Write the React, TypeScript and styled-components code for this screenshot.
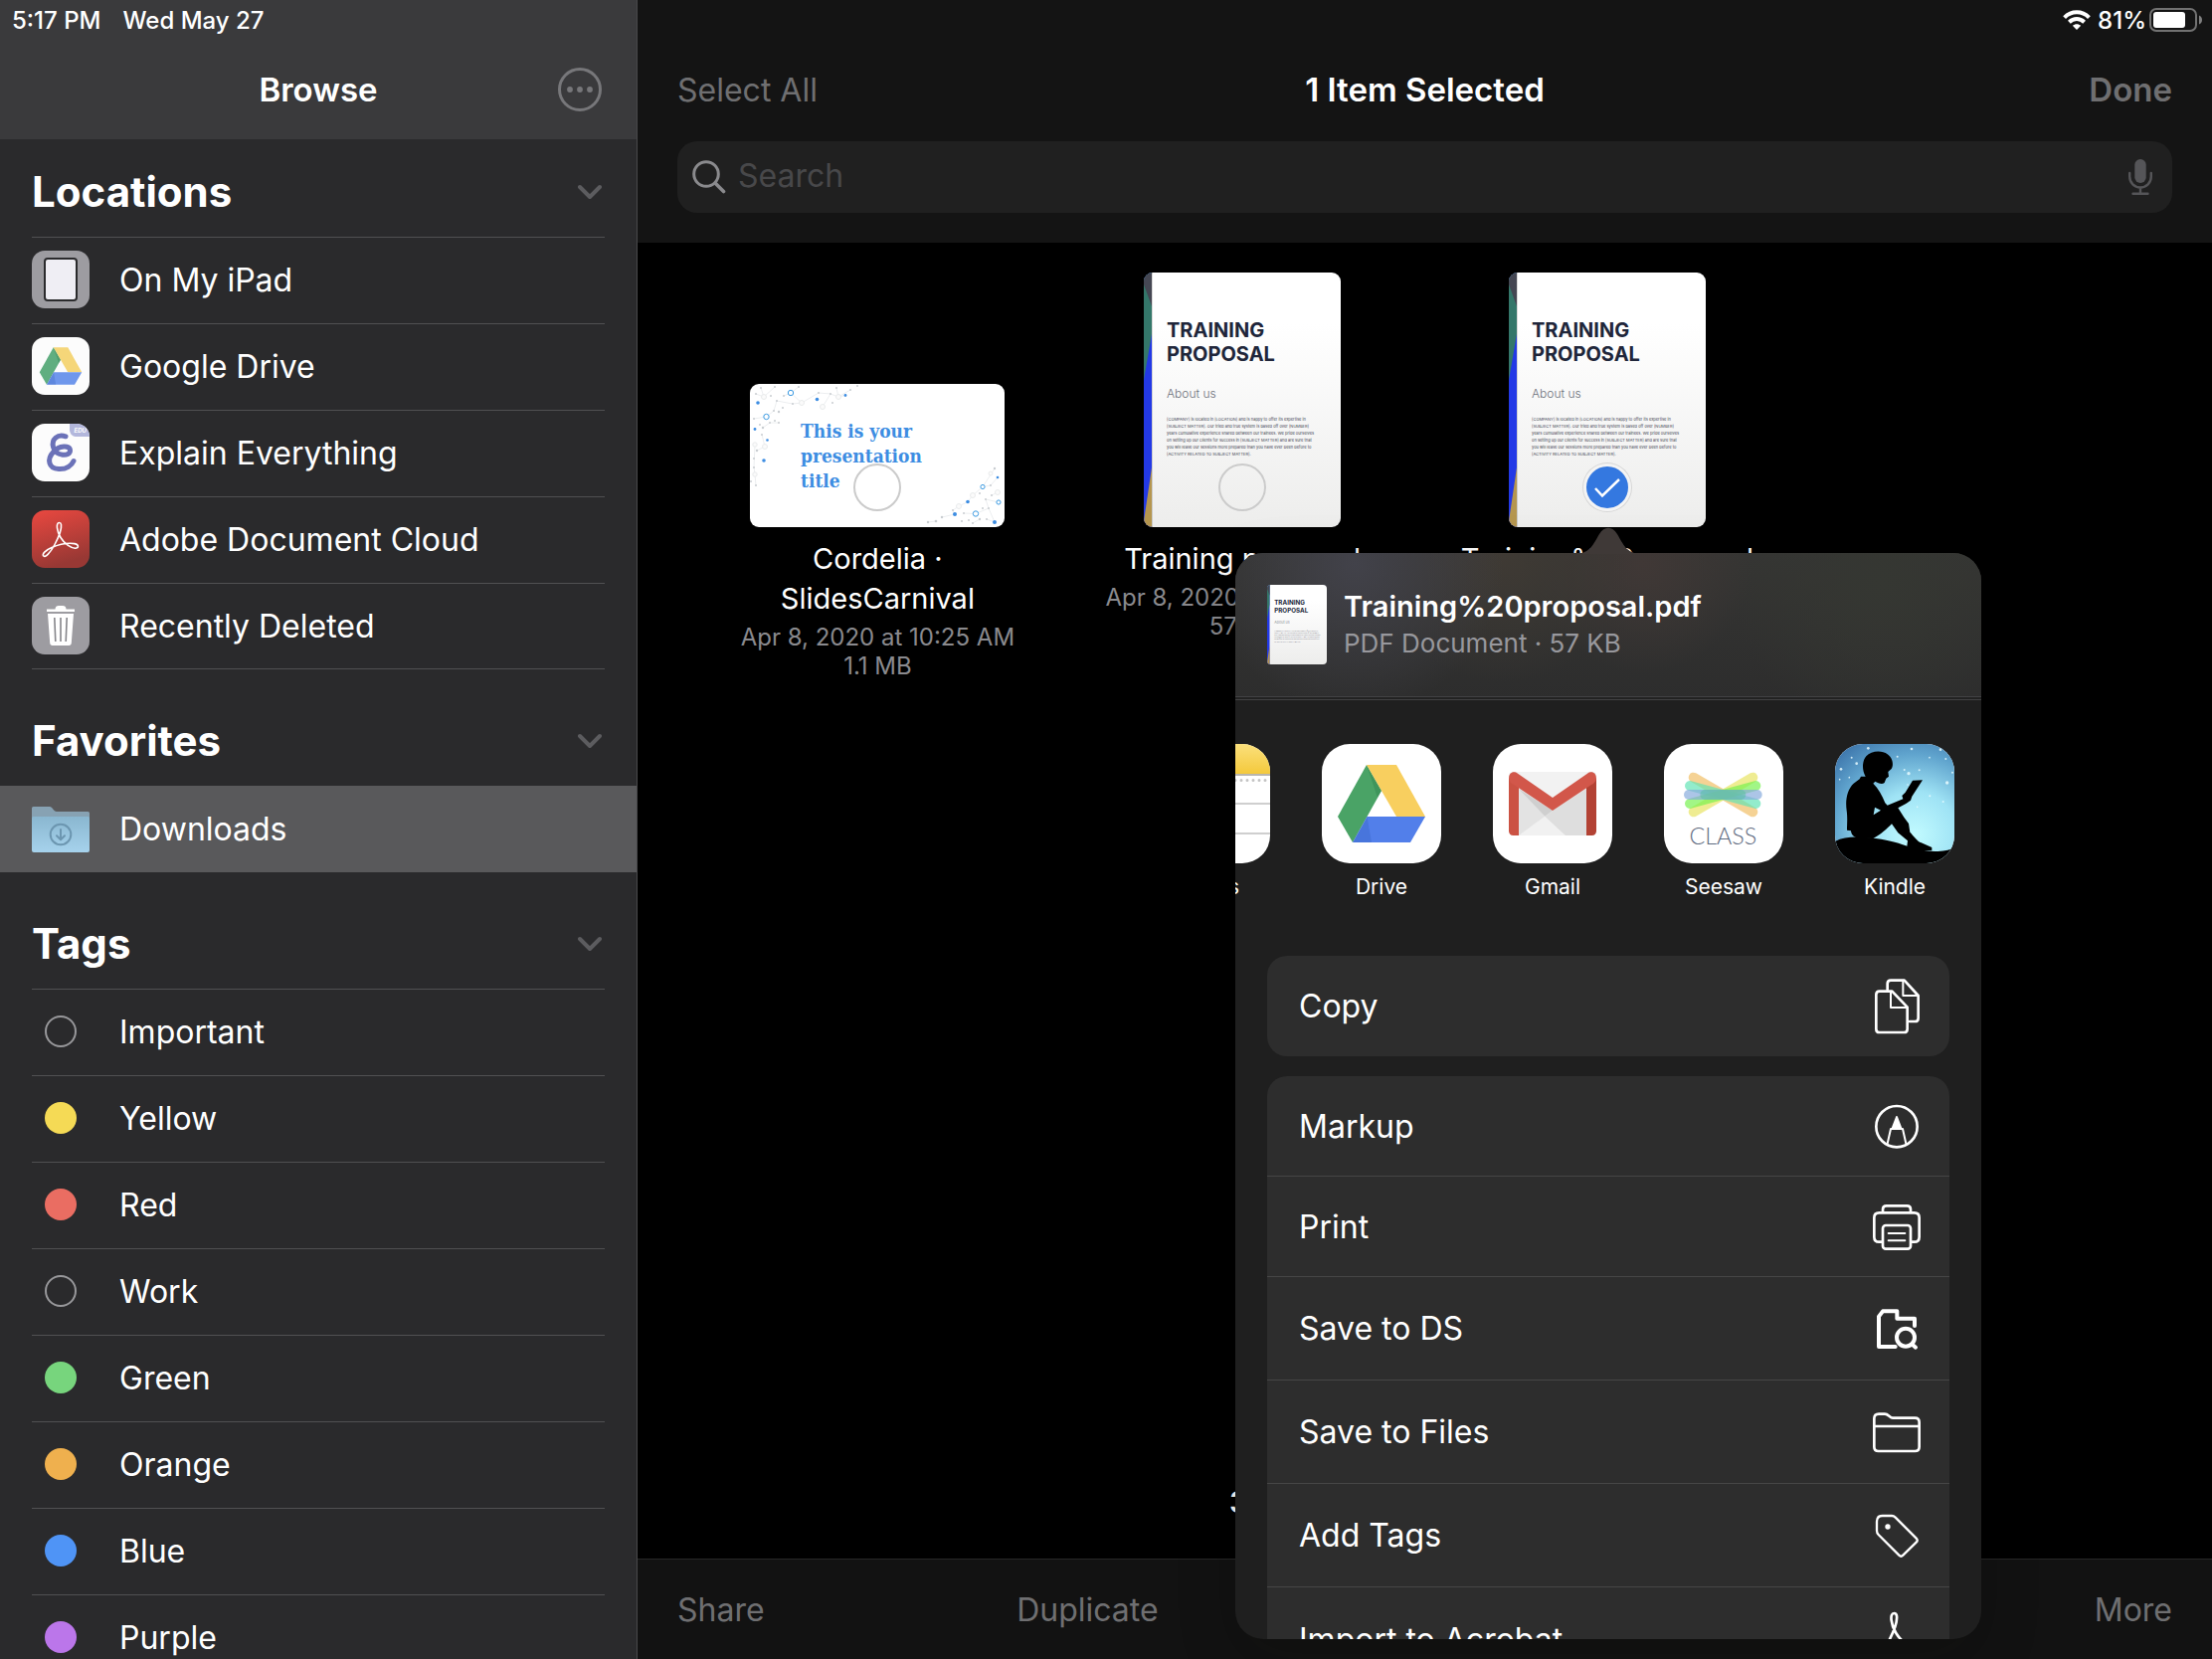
import React from "react";
import styled, { createGlobalStyle, css } from "styled-components";

const GlobalStyle = createGlobalStyle`
  *, *::before, *::after { box-sizing: border-box; }
  body {
    margin: 0;
    background: #000;
    color: #fff;
    font-family: Inter, "Liberation Sans", sans-serif;
    -webkit-font-smoothing: antialiased;
  }
  h1, h2, p, ul { margin: 0; padding: 0; }
  ul { list-style: none; }
  button, input { font: inherit; color: inherit; }
  button { border: 0; background: none; padding: 0; text-align: left; }
  a { color: inherit; text-decoration: none; }
  svg { display: block; flex: none; }
`;

/* ---------- shell ---------- */

const Shell = styled.div`
  position: relative;
  display: grid;
  grid-template-columns: 641px minmax(0, 1fr);
  height: 100vh;
  overflow: hidden;
`;

const Sidebar = styled.aside`
  background: #2a2a2c;
  border-right: 1px solid #48484a;
  overflow: hidden;
`;

const SidebarHeader = styled.header`
  background: #3a3a3c;
`;

const StatusBar = styled.div<{ $end?: boolean }>`
  display: flex;
  align-items: center;
  justify-content: ${(p) => (p.$end ? "flex-end" : "flex-start")};
  gap: ${(p) => (p.$end ? "0" : "22px")};
  height: 40px;
  padding: 0 10px 0 12px;
  font-size: 24px;
  font-weight: 500;
`;

const StatusText = styled.span<{ $level?: boolean }>`
  ${(p) =>
    p.$level &&
    css`
      margin: 0 3px 0 7px;
    `}
`;

const NavRow = styled.div`
  display: grid;
  grid-template-columns: 1fr auto 1fr;
  align-items: center;
  height: 100px;
  padding: 0 40px;
  font-size: 32px;

  > :last-child {
    justify-self: end;
  }
`;

const SidebarNav = styled(NavRow)`
  padding: 0 35px;
`;

const Title = styled.h1`
  font-size: 33px;
  font-weight: 600;
  grid-column: 2;
`;

const BarButton = styled.button<{ $strong?: boolean }>`
  color: #6f6f71;
  ${(p) =>
    p.$strong &&
    css`
      font-size: 33px;
      font-weight: 600;
    `}
`;

/* ---------- sidebar ---------- */

const SectionHead = styled.div<{ $first?: boolean }>`
  display: flex;
  align-items: center;
  justify-content: space-between;
  height: 90px;
  margin-top: ${(p) => (p.$first ? "8px" : "27px")};
  padding: 0 35px 0 32px;
`;

const SectionTitle = styled.h2`
  padding-bottom: 2px;
  font-size: 42px;
  font-weight: 700;
`;

const List = styled.ul<{ $closed?: boolean }>`
  position: relative;
  ${(p) =>
    p.$closed &&
    css`
      &::after {
        content: "";
        position: absolute;
        left: 32px;
        right: 32px;
        bottom: 0;
        height: 1px;
        background: #505052;
      }
    `}
`;

const RowLink = styled.a<{ $active?: boolean }>`
  display: flex;
  align-items: center;
  gap: 30px;
  height: 87px;
  font-size: 32px;
  ${(p) =>
    p.$active
      ? css`
          padding: 0 32px;
          background: #59595b;
        `
      : css`
          margin: 0 32px;
          padding-bottom: 2px;
          border-top: 1px solid #505052;
        `}
`;

const Slot = styled.span`
  display: grid;
  place-items: center;
  width: 58px;
`;

const Dot = styled.span<{ $color?: string }>`
  width: 32px;
  height: 32px;
  border-radius: 50%;
  ${(p) =>
    p.$color
      ? css`
          background: ${p.$color};
        `
      : css`
          border: 2px solid #98989b;
        `}
`;

/* ---------- main column ---------- */

const Main = styled.main`
  display: flex;
  flex-direction: column;
  min-width: 0;
`;

const TopBar = styled.header`
  background: #141414;
  padding-bottom: 30px;
`;

const SearchField = styled.label`
  display: flex;
  align-items: center;
  gap: 12px;
  height: 72px;
  margin: 2px 40px 0;
  padding: 0 20px 0 15px;
  border-radius: 20px;
  background: #202020;
`;

const SearchInput = styled.input`
  flex: 1;
  min-width: 0;
  border: 0;
  padding: 0 0 3px;
  outline: 0;
  background: none;
  font-size: 32px;

  &::placeholder {
    color: #48484a;
    opacity: 1;
  }
`;

const FileGrid = styled.section`
  display: grid;
  grid-template-columns: repeat(4, minmax(0, 1fr));
  padding: 30px 58px 0;
`;

const FileItem = styled.article`
  display: flex;
  flex-direction: column;
  align-items: center;
  text-align: center;
`;

const ThumbArea = styled.div`
  display: flex;
  align-items: flex-end;
  height: 256px;
`;

const Thumb = styled.div`
  position: relative;
  border-radius: 9px;
  overflow: hidden;
`;

const Tick = styled.input`
  position: absolute;
  left: calc(50% - 24px);
  bottom: 16px;
  width: 48px;
  height: 48px;
  margin: 0;
  appearance: none;
  border: 2px solid #cbcbcb;
  border-radius: 50%;

  &:checked {
    border: 3px solid #f4f4f4;
    background: #3478e0;
    box-shadow: 0 0 0 1px #d6d6d6;
  }
`;

const TickMark = styled.svg`
  position: absolute;
  left: calc(50% - 24px);
  bottom: 16px;
  pointer-events: none;
`;

const FileName = styled.p`
  width: 300px;
  margin-top: 12px;
  font-size: 29px;
  line-height: 40px;
`;

const FileMeta = styled.p`
  margin-top: 4px;
  color: #8a8a8e;
  font-size: 24px;
  line-height: 29px;
  white-space: pre-line;
`;

const Summary = styled.p`
  margin: auto 0 37px;
  text-align: center;
  font-size: 30px;
  line-height: 40px;
  font-weight: 600;
`;

const Toolbar = styled.footer`
  display: flex;
  align-items: center;
  justify-content: space-between;
  height: 101px;
  padding: 0 40px;
  border-top: 1px solid #272727;
  background: #121212;
  font-size: 32px;
`;

/* ---------- share popover ---------- */

const Popover = styled.section`
  position: absolute;
  top: 556px;
  right: 232px;
  bottom: 20px;
  width: 750px;
  border-radius: 28px;
  background: #1f1f1f;
  box-shadow: 0 20px 60px rgba(8, 10, 7, 0.2);
`;

const Arrow = styled.svg`
  position: absolute;
  top: -26px;
  left: 343px;
`;

const PopoverBody = styled.div`
  height: 100%;
  border-radius: 28px;
  overflow: hidden;
`;

const ShareHead = styled.header`
  display: flex;
  align-items: center;
  gap: 17px;
  height: 148px;
  padding: 0 32px 4px;
  border-bottom: 1px solid #414143;
  background:
    linear-gradient(#424244, #424244) 0 144px / 100% 1px no-repeat,
    linear-gradient(#222, #222) 0 145px / 100% 3px no-repeat,
    radial-gradient(circle at 120px 10px, #42424a 0, transparent 150px),
    radial-gradient(circle at 270px 0, #3f3a34 0, transparent 130px),
    radial-gradient(circle at 410px 10px, #403836 0, transparent 110px),
    radial-gradient(circle at 650px 30px, #353732 0, transparent 150px),
    linear-gradient(#353533, #2d2d2d);
`;

const MiniThumb = styled.div`
  border-radius: 4px;
  overflow: hidden;
`;

const ShareTitle = styled.h2`
  font-size: 29px;
  line-height: 38px;
  font-weight: 600;
`;

const ShareSub = styled.p`
  color: #98989d;
  font-size: 26px;
  line-height: 36px;
`;

const AppRow = styled.ul`
  display: flex;
  gap: 52px;
  margin-left: -85px;
  padding-top: 44px;
`;

const AppButton = styled.button`
  display: flex;
  flex-direction: column;
  align-items: center;
  gap: 10px;
  width: 120px;
  font-size: 21px;
  line-height: 28px;
`;

const AppIcon = styled.span`
  display: block;
  width: 120px;
  height: 120px;
  border-radius: 28px;
  overflow: hidden;
  background: #fff;
`;

const Actions = styled.div`
  display: flex;
  flex-direction: column;
  gap: 20px;
  padding: 55px 32px 0;
`;

const ActionGroup = styled.div`
  border-radius: 20px;
  overflow: hidden;
  background: #2d2d2d;
`;

const Action = styled.button<{ $tall?: boolean }>`
  display: flex;
  align-items: center;
  justify-content: space-between;
  width: 100%;
  height: ${(p) => (p.$tall ? "104px" : "101px")};
  padding: 0 28px 0 32px;
  font-size: 32px;

  &:not(:last-child) {
    border-bottom: 1px solid #464646;
  }
`;

/* ---------- drawings ---------- */

const Chevron = () => (
  <svg width="24" height="16" viewBox="0 0 24 16" fill="none" stroke="#5c5c5f" strokeWidth="4" strokeLinecap="round" strokeLinejoin="round">
    <path d="M2 3 12 13 22 3" />
  </svg>
);

const MoreIcon = () => (
  <svg width="44" height="44" viewBox="0 0 44 44">
    <circle cx="22" cy="22" r="20.5" fill="none" stroke="#77777a" strokeWidth="3" />
    <circle cx="12" cy="22" r="2.9" fill="#77777a" />
    <circle cx="22" cy="22" r="2.9" fill="#77777a" />
    <circle cx="32" cy="22" r="2.9" fill="#77777a" />
  </svg>
);

const Wifi = () => (
  <svg width="28" height="20" viewBox="0 0 28 20" fill="none" stroke="#fff" strokeWidth="4">
    <path d="M1.6 7.6C8.6 .6 19.4 .6 26.4 7.6" />
    <path d="M6.4 12.2C10.8 8 17.2 8 21.6 12.2" />
    <path d="M14 20 9.8 15.8C12.2 13.6 15.8 13.6 18.2 15.8Z" fill="#fff" stroke="none" />
  </svg>
);

const Battery = () => (
  <svg width="53" height="24" viewBox="0 0 53 24">
    <rect x="1" y="1" width="46" height="22" rx="6" fill="none" stroke="#727272" strokeWidth="2" />
    <rect x="4" y="4" width="32" height="16" rx="3" fill="#fff" />
    <path d="M50 7.5C54 9 54 15 50 16.5Z" fill="#808080" />
  </svg>
);

const SearchIcon = () => (
  <svg width="34" height="34" viewBox="0 0 34 34" fill="none" stroke="#8a8a8d" strokeLinecap="round">
    <circle cx="14" cy="14" r="12.3" strokeWidth="3" />
    <path d="M23.5 23.5 31.5 31.5" strokeWidth="3.6" />
  </svg>
);

const Mic = () => (
  <svg width="24" height="36" viewBox="0 0 24 36" fill="none" stroke="#555558" strokeWidth="2.4" strokeLinecap="round">
    <rect x="6.3" y="0" width="11.4" height="24" rx="5.7" fill="#555558" stroke="none" />
    <path d="M1.2 14V17.5C1.2 24 6 28.5 12 28.5S22.8 24 22.8 17.5V14M12 28.5V34.5M4.5 34.7H19.5" />
  </svg>
);

const IPadIcon = () => (
  <svg width="58" height="58" viewBox="0 0 58 58">
    <rect width="58" height="58" rx="13" fill="#9d9ca1" />
    <rect x="13" y="8" width="32" height="42" rx="3" fill="#efeef4" stroke="#2a2a2c" strokeWidth="2" />
  </svg>
);

const DriveShape = ({ soft }: { soft?: boolean }) => (
  <>
    <path d="M45 21 60 47 31 99 16 73Z" fill={soft ? "#60ae80" : "#4aa366"} />
    <path d="M45 21H75L104 73H75Z" fill={soft ? "#f5d679" : "#f8cf5f"} />
    <path d="M45.5 73H104L89 99H31Z" fill={soft ? "#6f97ec" : "#527fea"} />
    <path d="M45.5 73 31 99 50 99Z" fill="#2b56b5" opacity=".25" />
    <path d="M45 21 60 47 56 54Z" fill="#1d6b3c" opacity=".25" />
  </>
);

const DriveSmall = () => (
  <svg width="58" height="58" viewBox="0 0 120 120">
    <rect width="120" height="120" rx="27" fill="#fcfcfc" />
    <DriveShape soft />
  </svg>
);

const ExplainIcon = () => (
  <svg width="58" height="58" viewBox="0 0 58 58">
    <clipPath id="explain-clip">
      <rect width="58" height="58" rx="13" />
    </clipPath>
    <g clipPath="url(#explain-clip)">
      <rect width="58" height="58" fill="#fcfcfc" />
      <path d="M38 0H58V13H44C40 13 38 9 38 6Z" fill="#b3b7dc" />
      <text x="42.5" y="9.3" fontSize="6" fontWeight="700" fontStyle="italic" fill="#fff">EDU</text>
    </g>
    <path
      d="M34 12.8C26 10 19.5 15.5 21.5 23.5C24 33 38.5 33.5 38.5 27C38.5 21 27 22 22 28C14.5 36 17 45 27 45.5C35 46 40 42 42 37.5"
      fill="none"
      stroke="#6b72b8"
      strokeWidth="5"
      strokeLinecap="round"
    />
  </svg>
);

const AcrobatMark = () => (
  <path
    d="M27.5 12.5C24 12.5 25 21 29 27.5C33 34 39 38 43.5 38.2C47.5 38.3 47.5 34.5 43 33.6C37 32.8 27 34.5 20 37.5C13 40.5 10.5 44 11.5 45.8C13.5 48 18.5 43 23 34.5C27.5 26 30 18 29.5 14.5C29.3 13 28.5 12.5 27.5 12.5Z"
    fill="none"
    stroke="#fff"
  />
);

const AdobeIcon = () => (
  <svg width="58" height="58" viewBox="0 0 58 58">
    <linearGradient id="adobe-red" x1="0" y1="0" x2=".3" y2="1">
      <stop offset="0" stopColor="#ea4840" />
      <stop offset="1" stopColor="#983834" />
    </linearGradient>
    <rect width="58" height="58" rx="13" fill="url(#adobe-red)" />
    <g strokeWidth="1.6">
      <AcrobatMark />
    </g>
  </svg>
);

const TrashIcon = () => (
  <svg width="58" height="58" viewBox="0 0 58 58">
    <rect width="58" height="58" rx="13" fill="#9d9ca1" />
    <path d="M15 15V12.5H23.5C23.5 10 25 9 27 9H31C33 9 34.5 10 34.5 12.5H43V15Z" fill="#fff" />
    <path d="M16 17H42L39.8 46.5C39.7 48 38.8 49 37.3 49H20.7C19.2 49 18.3 48 18.2 46.5Z" fill="#fff" />
    <path d="M22.8 21 23.8 45M29 21V45M35.2 21 34.2 45" stroke="#85858a" strokeWidth="1.6" fill="none" />
  </svg>
);

const FolderIcon = () => (
  <svg width="58" height="46" viewBox="0 0 58 46">
    <linearGradient id="folder-front" x1="0" y1="0" x2="0" y2="1">
      <stop offset="0" stopColor="#8ab7d0" />
      <stop offset="1" stopColor="#a6d2ec" />
    </linearGradient>
    <path d="M0 1.5Q0 0 1.5 0H18C20.5 0 22 5 25 5H56.5Q58 5 58 6.5V20H0Z" fill="#87a2b3" />
    <path d="M0 11.5Q0 10 1.5 10H56.5Q58 10 58 11.5V44Q58 46 56 46H2Q0 46 0 44Z" fill="url(#folder-front)" />
    <g fill="none" stroke="#6c96b0" strokeWidth="2" strokeLinecap="round" strokeLinejoin="round">
      <circle cx="29" cy="28" r="10.3" />
      <path d="M29 23V33M25 29.3 29 33.3 33 29.3" />
    </g>
  </svg>
);

type Spot = [number, number, number];

const blueRings: Spot[] = [[41, 9, 2.7], [16.5, 33, 2.7], [234, 103.5, 2.1], [250, 119, 2.1], [227, 130.5, 2.7]];
const blueDots: Spot[] = [
  [8, 19, 1.8], [67.5, 15.5, 1.8], [96, 11.5, 1.4], [5, 45.5, 1.4], [17.5, 56.5, 1.3], [14, 77, 1.8],
  [249, 94, 1.3], [219, 118.5, 1.8], [206, 131, 2], [246, 139, 2],
];
const grayDots: Spot[] = [
  [6, 10, 1], [11, 4, 1], [25, 3, 1], [21, 12, 1], [34, 12, 1], [49, 3, 1], [69, 9, 1], [81, 10, 1], [87, 4, 1],
  [101, 6, 1], [108, 2, 1], [83, 19, 1], [43, 20, 1], [27, 17, 1], [33, 24, 1], [29, 28, 1.2], [24, 27, 1], [4, 35, 1],
  [10, 41, 1], [13, 44, 1.2], [20, 39, 1], [25, 37, 1], [29, 39, 1], [12, 51, 1], [7, 67, 1.2], [4, 75, 1], [4, 84, 1],
  [1, 98, 1], [6, 102, 1], [246, 85, 1.2], [242, 102, 1], [231, 110, 1], [237, 116, 1], [243, 112, 1], [240, 125, 1],
  [234, 125, 1], [231, 136, 1.2], [238, 136, 1], [224, 140, 1], [215, 130, 1], [204, 127, 1], [193, 134, 1.2],
  [187, 138, 1.3], [179, 139, 1.2], [213, 138, 1], [220, 137, 1],
];
const paleRings: Spot[] = [
  [14, 13, 2.5], [52, 19, 2.5], [73, 23, 2.5], [89, 13, 2.5], [5, 61, 2.2], [15, 63, 2.5], [5, 91, 2.2],
  [242, 90, 2], [210, 123, 2.5], [224, 112, 2.5], [249, 109, 2.5],
];

const SlideThumb = () => (
  <svg width="256" height="144" viewBox="0 0 256 144">
    <rect width="256" height="144" fill="#fff" />
    <path
      d="M6 10 14 13 25 3M11 4 14 13M34 12 41 9 49 3M41 9 52 19 69 9 81 10 89 13 96 11.5M52 19 43 20 27 17M73 23 81 10M87 4 89 13 101 6M4 35 16.5 33 24 27 27 17M13 44 20 39 29 39M12 51 15 63 7 67M5 61 4 84 5 91 6 102M187 138 179 139M193 134 206 131 204 127 210 123 219 118.5 224 112 234 103.5 246 85M215 130 227 130.5 240 125 237 116 250 119M243 112 249 109M231 136 224 140M238 136 246 139 240 125M249 94 242 102 234 103.5"
      fill="none"
      stroke="#eceef0"
    />
    {paleRings.map(([x, y, r]) => <circle key={`p${x}-${y}`} cx={x} cy={y} r={r} fill="#fbfbfb" stroke="#e9ebec" />)}
    {grayDots.map(([x, y, r]) => <circle key={`g${x}-${y}`} cx={x} cy={y} r={r} fill="#c9cdd1" />)}
    {blueDots.map(([x, y, r]) => <circle key={`b${x}-${y}`} cx={x} cy={y} r={r} fill="#3d8de2" />)}
    {blueRings.map(([x, y, r]) => <circle key={`r${x}-${y}`} cx={x} cy={y} r={r} fill="#fff" stroke="#3d9be2" />)}
    <g fontFamily="'DejaVu Serif Condensed', 'DejaVu Serif', serif" fontSize="19" fontWeight="700" fill="#3d8de2">
      <text x="51" y="54">This is your</text>
      <text x="51" y="79">presentation</text>
      <text x="51" y="104">title</text>
    </g>
  </svg>
);

const bodyLines = [
  "[COMPANY] is located in [LOCATION] and is happy to offer its expertise in",
  "[SUBJECT MATTER]. Our tried and true system is based off over [NUMBER]",
  "years cumulative experience shared between our trainees. We pride ourselves",
  "on setting up our clients for success in [SUBJECT MATTER] and are sure that",
  "you will leave our sessions more prepared than you have ever been before to",
  "[ACTIVITY RELATED TO SUBJECT MATTER].",
];

const ProposalPage = ({ id, width, height }: { id: string; width: number; height: number }) => (
  <svg width={width} height={height} viewBox="0 0 198 256" preserveAspectRatio="xMinYMin slice">
    <linearGradient id={id} x1="0" y1="0" x2="0" y2="1">
      <stop offset=".2" stopColor="#fff" />
      <stop offset="1" stopColor="#ededec" />
    </linearGradient>
    <rect width="198" height="256" fill={`url(#${id})`} />
    <rect width="8" height="256" fill="#2339e6" />
    <path d="M0 0H8V62L0 108Z" fill="#34776a" />
    <path d="M0 0H8V34L0 12Z" fill="#454753" />
    <path d="M8 196V256H0V250Z" fill="#b5964f" />
    <path d="M8.5 0V256" stroke="#000" strokeOpacity=".15" />
    <g fill="#20263a" fontSize="20" fontWeight="700">
      <text x="23" y="65">TRAINING</text>
      <text x="23" y="89">PROPOSAL</text>
    </g>
    <text x="23" y="126" fontSize="12" fontWeight="300" fill="#6d717b">About us</text>
    <g fontSize="4" fill="#3c4150">
      {bodyLines.map((line, i) => <text key={line} x="23" y={149 + i * 7}>{line}</text>)}
    </g>
  </svg>
);

const NotesArt = () => (
  <svg width="120" height="120" viewBox="0 0 120 120">
    <linearGradient id="notes-yellow" x1="0" y1="0" x2="0" y2="1">
      <stop offset="0" stopColor="#fbe07c" />
      <stop offset="1" stopColor="#f4c93c" />
    </linearGradient>
    <rect width="120" height="30" fill="url(#notes-yellow)" />
    <path d="M0 31H120" stroke="#b9b6ae" strokeWidth="2" />
    <path d="M1 36.5H120" stroke="#c4c4c4" strokeWidth="3" strokeLinecap="round" strokeDasharray="0 6" />
    <path d="M0 60H120M0 90H120" stroke="#cfcfcf" strokeWidth="2" />
  </svg>
);

const DriveArt = () => (
  <svg width="120" height="120" viewBox="0 0 120 120"><DriveShape /></svg>
);

const GmailArt = () => (
  <svg width="120" height="120" viewBox="63 24 360 360">
    <rect x="111" y="108" width="264" height="192" rx="14" fill="#e9e9e9" />
    <path d="M128 108H358L243 186Z" fill="#f2f2f2" />
    <path d="M141 160 220 242 141 300Z" fill="#e3e3e3" />
    <path d="M141 160 243 225 220 242Z" fill="#cfcfcf" />
    <path d="M141 300 220 242 282 300Z" fill="#f1f1f1" />
    <path d="M220 242 243 225 345 160V300H282Z" fill="#dedede" />
    <path d="M111 126 141 150V300H125Q111 300 111 286Z" fill="#cb5243" />
    <path d="M375 126 345 150V300H361Q375 300 375 286Z" fill="#b34234" />
    <path d="M112 132C108 112 124 102 138 113L243 186 348 113C362 102 378 112 374 132C372 140 366 144 360 147L243 225 126 147C120 144 114 140 112 132Z" fill="#d2574a" />
  </svg>
);

const SeesawArt = () => (
  <svg width="120" height="120" viewBox="576 24 360 360">
    <g fill="none" strokeWidth="30" strokeLinecap="round" strokeOpacity=".68">
      <path d="M665 125 844 229" stroke="#f0bd62" />
      <path d="M665 229 844 125" stroke="#e8e35e" />
      <path d="M654 150 853 204" stroke="#5fe3b4" />
      <path d="M654 204 853 150" stroke="#74f24c" />
      <path d="M651 177H857" stroke="#84a9dc" />
      <path d="M700 177H808" stroke="#55bf9f" strokeOpacity=".5" />
    </g>
    <text x="754" y="326" textAnchor="middle" fontFamily="Lato, sans-serif" fontWeight="300" fontSize="70" fill="#5f6b80">CLASS</text>
  </svg>
);

const kindleStars: Spot[] = [
  [1110, 100, 4], [1157, 83, 4], [1142, 65, 3], [1192, 37, 4], [1323, 39, 4], [1410, 41, 4], [1426, 69, 3], [1377, 65, 2.5],
  [1314, 113, 5], [1301, 102, 3], [1346, 103, 3], [1430, 141, 5], [1418, 198, 3], [1280, 62, 3], [1106, 131, 2.5], [1135, 125, 2.5],
  [1378, 181, 3], [1340, 214, 2.5], [1311, 147, 2.5], [1446, 110, 3],
];

const KindleArt = () => (
  <svg width="120" height="120" viewBox="1092 24 360 360">
    <radialGradient id="kindle-sky" gradientUnits="userSpaceOnUse" cx="1330" cy="300" r="330">
      <stop offset="0" stopColor="#c2fbff" />
      <stop offset=".4" stopColor="#9fe3f5" />
      <stop offset=".75" stopColor="#5fa3cd" />
      <stop offset="1" stopColor="#3f78ad" />
    </radialGradient>
    <rect x="1092" y="24" width="360" height="360" fill="url(#kindle-sky)" />
    {kindleStars.map(([x, y, r]) => <circle key={`${x}`} cx={x} cy={y} r={r} fill="#e9fbff" opacity=".85" />)}
    <path d="M1092 318C1125 300 1170 304 1215 309C1260 315 1290 325 1312 333C1345 344 1375 349 1402 348C1425 347 1442 343 1452 337V384H1092Z" />
    <path
      fillRule="evenodd"
      d="M1184 122C1172 102 1174 74 1186 61C1200 44 1234 42 1250 55C1265 65 1270 86 1262 99L1252 108 1254 122 1246 128 1241 141C1233 147 1222 142 1213 137L1207 143C1222 158 1234 178 1243 202L1250 209 1297 190 1294 180 1304 170 1326 134 1356 133 1324 182 1320 194 1306 204 1282 217 1300 245 1314 264 1318 290C1328 300 1340 318 1352 322L1384 336 1384 346H1330L1309 333 1311 316 1282 292 1263 265C1248 280 1232 296 1207 309L1160 308C1146 304 1140 294 1140 286L1128 284C1128 262 1130 248 1127 225C1122 190 1130 160 1148 143L1166 130 1170 122ZM1212 215 1230 224 1208 238Z"
    />
  </svg>
);

/* Action glyphs share one 50×56 frame, most drawn at three units per pixel. */
const Glyph = styled.svg.attrs({ width: 50, height: 56 })`
  fill: none;
  stroke: #fff;
  stroke-linejoin: round;
  stroke-linecap: round;
`;

const CopyGlyph = () => (
  <Glyph viewBox="36 41 150 168">
    <g strokeWidth="8">
      <path d="M83 74V56Q83 46 93 46H134L176 92V160Q176 170 166 170H150" />
      <path d="M59 79H97L143 127V193Q143 203 133 203H59Q49 203 49 193V89Q49 79 59 79Z" />
    </g>
    <path d="M130 48V92H174M93 81V128H141" strokeWidth="6" />
  </Glyph>
);

const MarkupGlyph = () => (
  <Glyph viewBox="36 403 150 168">
    <circle cx="111" cy="489" r="62" strokeWidth="8" />
    <path d="M83 540 93 496H129L139 540" strokeWidth="6" />
    <path d="M111 460 98 494H124Z" fill="#fff" strokeWidth="6" />
  </Glyph>
);

const PrintGlyph = () => (
  <Glyph viewBox="36 705 150 168">
    <g strokeWidth="8">
      <path d="M69 746V738Q69 727 80 727H142Q153 727 153 738V746" />
      <path d="M66 836H58Q43 836 43 821V763Q43 748 58 748H164Q179 748 179 763V821Q179 836 164 836H156" />
      <rect x="69" y="786" width="84" height="71" rx="9" />
    </g>
    <path d="M86 810H136M86 832H136" strokeWidth="6" />
  </Glyph>
);

const FolderSearchGlyph = () => (
  <Glyph viewBox="36 1013 150 168">
    <g strokeWidth="12">
      <path d="M107 1151H57V1060L69 1044H112V1066H165V1088" />
      <circle cx="138" cy="1123" r="27" />
      <path d="M158 1144 168 1153" />
    </g>
  </Glyph>
);

const FilesGlyph = () => (
  <Glyph viewBox="36 1325 150 168">
    <path
      d="M43 1368Q43 1354 57 1354H75C86 1354 90 1366 99 1366H166Q179 1366 179 1379V1453Q179 1466 166 1466H56Q43 1466 43 1453ZM43 1391H179"
      strokeWidth="8"
    />
  </Glyph>
);

const TagGlyph = () => (
  <Glyph viewBox="36 0 150 168">
    <path d="M68 24H96Q102 24 107 29L170 92Q176 98 170 104L130 143Q124 149 118 143L56 81Q51 76 51 69V41Q51 24 68 24Z" strokeWidth="7" />
    <circle cx="84" cy="57" r="8" fill="#fff" stroke="none" />
  </Glyph>
);

const AcrobatGlyph = () => (
  <Glyph viewBox="11 11 37 42">
    <g strokeWidth="2">
      <AcrobatMark />
    </g>
  </Glyph>
);

/* ---------- data ---------- */

const locations = [
  { label: "On My iPad", icon: <IPadIcon /> },
  { label: "Google Drive", icon: <DriveSmall /> },
  { label: "Explain Everything", icon: <ExplainIcon /> },
  { label: "Adobe Document Cloud", icon: <AdobeIcon /> },
  { label: "Recently Deleted", icon: <TrashIcon /> },
];

const tags: { label: string; color?: string }[] = [
  { label: "Important" },
  { label: "Yellow", color: "#f5da55" },
  { label: "Red", color: "#ea6d62" },
  { label: "Work" },
  { label: "Green", color: "#77d57d" },
  { label: "Orange", color: "#efb04e" },
  { label: "Blue", color: "#4f94f6" },
  { label: "Purple", color: "#bb76ea" },
];

const files = [
  { name: "Cordelia · SlidesCarnival", meta: "Apr 8, 2020 at 10:25 AM\n1.1 MB", art: <SlideThumb />, picked: false },
  { name: "Training proposal", meta: "Apr 8, 2020 at 10:25 AM\n57 KB", art: <ProposalPage id="page-a" width={198} height={256} />, picked: false },
  { name: "Training%20proposal", meta: "Apr 8, 2020 at 10:24 AM\n57 KB", art: <ProposalPage id="page-b" width={198} height={256} />, picked: true },
];

const apps = [
  { label: "Notes", art: <NotesArt /> },
  { label: "Drive", art: <DriveArt /> },
  { label: "Gmail", art: <GmailArt /> },
  { label: "Seesaw", art: <SeesawArt /> },
  { label: "Kindle", art: <KindleArt /> },
];

const actions = [
  { label: "Markup", glyph: <MarkupGlyph />, tall: false },
  { label: "Print", glyph: <PrintGlyph />, tall: false },
  { label: "Save to DS", glyph: <FolderSearchGlyph />, tall: true },
  { label: "Save to Files", glyph: <FilesGlyph />, tall: true },
  { label: "Add Tags", glyph: <TagGlyph />, tall: true },
  { label: "Import to Acrobat", glyph: <AcrobatGlyph />, tall: true },
];

const Section = ({ title, first }: { title: string; first?: boolean }) => (
  <SectionHead $first={first}>
    <SectionTitle>{title}</SectionTitle>
    <button type="button" aria-label={`Collapse ${title}`}><Chevron /></button>
  </SectionHead>
);

export default function App() {
  return (
    <>
      <GlobalStyle />
      <Shell>
        <Sidebar>
          <SidebarHeader>
            <StatusBar>
              <StatusText>5:17 PM</StatusText>
              <StatusText>Wed May 27</StatusText>
            </StatusBar>
            <SidebarNav>
              <Title>Browse</Title>
              <button type="button" aria-label="More options"><MoreIcon /></button>
            </SidebarNav>
          </SidebarHeader>
          <nav>
            <Section title="Locations" first />
            <List $closed>
              {locations.map((l) => (
                <li key={l.label}>
                  <RowLink href="#"><Slot>{l.icon}</Slot>{l.label}</RowLink>
                </li>
              ))}
            </List>
            <Section title="Favorites" />
            <List>
              <li>
                <RowLink href="#" $active><Slot><FolderIcon /></Slot>Downloads</RowLink>
              </li>
            </List>
            <Section title="Tags" />
            <List>
              {tags.map((t) => (
                <li key={t.label}>
                  <RowLink href="#"><Slot><Dot $color={t.color} /></Slot>{t.label}</RowLink>
                </li>
              ))}
            </List>
          </nav>
        </Sidebar>

        <Main>
          <TopBar>
            <StatusBar $end>
              <Wifi />
              <StatusText $level>81%</StatusText>
              <Battery />
            </StatusBar>
            <NavRow>
              <BarButton type="button">Select All</BarButton>
              <Title>1 Item Selected</Title>
              <BarButton type="button" $strong>Done</BarButton>
            </NavRow>
            <SearchField>
              <SearchIcon />
              <SearchInput type="text" placeholder="Search" aria-label="Search" />
              <Mic />
            </SearchField>
          </TopBar>

          <FileGrid>
            {files.map((f) => (
              <FileItem key={f.name}>
                <ThumbArea>
                  <Thumb>
                    {f.art}
                    <Tick type="checkbox" defaultChecked={f.picked} aria-label={`Select ${f.name}`} />
                    {f.picked && (
                      <TickMark width="48" height="48" viewBox="0 0 48 48" fill="none" stroke="#fff" strokeWidth="2.5">
                        <path d="M12 25 19 32.5 36 16" />
                      </TickMark>
                    )}
                  </Thumb>
                </ThumbArea>
                <FileName>{f.name}</FileName>
                <FileMeta>{f.meta}</FileMeta>
              </FileItem>
            ))}
          </FileGrid>

          <Summary>3 items, 24.93 GB available</Summary>

          <Toolbar>
            {["Share", "Duplicate", "Move", "Delete", "More"].map((label) => (
              <BarButton key={label} type="button">{label}</BarButton>
            ))}
          </Toolbar>
        </Main>

        <Popover aria-label="Share">
          <Arrow width="64" height="27" viewBox="0 0 64 27">
            <path d="M0 27C14 26 17 17 23 7C28 -1.5 36 -1.5 41 7C47 17 50 26 64 27Z" fill="#3f3937" />
          </Arrow>
          <PopoverBody>
            <ShareHead>
              <MiniThumb><ProposalPage id="page-c" width={60} height={80} /></MiniThumb>
              <div>
                <ShareTitle>Training%20proposal.pdf</ShareTitle>
                <ShareSub>PDF Document · 57 KB</ShareSub>
              </div>
            </ShareHead>
            <AppRow>
              {apps.map((a) => (
                <li key={a.label}>
                  <AppButton type="button"><AppIcon>{a.art}</AppIcon>{a.label}</AppButton>
                </li>
              ))}
            </AppRow>
            <Actions>
              <ActionGroup>
                <Action type="button">Copy<CopyGlyph /></Action>
              </ActionGroup>
              <ActionGroup>
                {actions.map((a) => (
                  <Action key={a.label} type="button" $tall={a.tall}>{a.label}{a.glyph}</Action>
                ))}
              </ActionGroup>
            </Actions>
          </PopoverBody>
        </Popover>
      </Shell>
    </>
  );
}
